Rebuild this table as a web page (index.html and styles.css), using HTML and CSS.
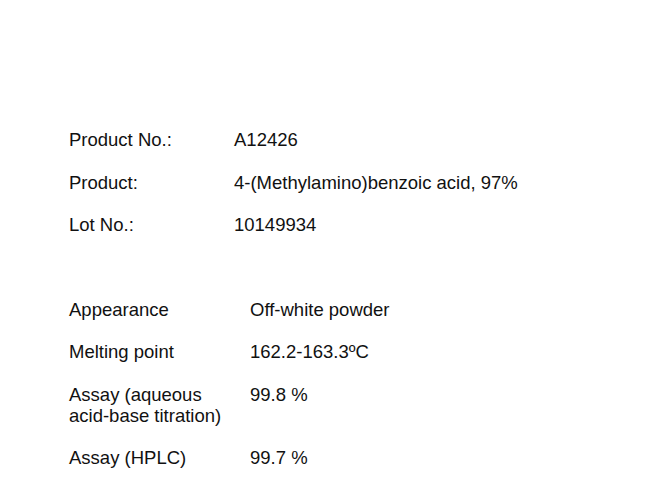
FILE: index.html
```html
<!DOCTYPE html>
<html lang="en">
<head>
    <meta charset="UTF-8">
    <title>Certificate of Analysis - A12426</title>
    <link rel="stylesheet" href="styles.css">
</head>
<body>
    <div class="sheet">
        <div class="info-table header-info">
            <div class="label">Product No.:</div>
            <div class="value">A12426</div>

            <div class="label">Product:</div>
            <div class="value">4-(Methylamino)benzoic acid, 97%</div>

            <div class="label">Lot No.:</div>
            <div class="value">10149934</div>
        </div>

        <div class="info-table results">
            <div class="label">Appearance</div>
            <div class="value">Off-white powder</div>

            <div class="label">Melting point</div>
            <div class="value">162.2-163.3ºC</div>

            <div class="label">Assay (aqueous<br>acid-base titration)</div>
            <div class="value">99.8 %</div>

            <div class="label">Assay (HPLC)</div>
            <div class="value">99.7 %</div>
        </div>
    </div>
</body>
</html>
```

FILE: styles.css
```css
* {
    margin: 0;
    padding: 0;
    box-sizing: border-box;
}

body {
    font-family: 'Liberation Sans', Arial, sans-serif;
    font-size: 18.5px;
    line-height: 21px;
    color: #111;
    background-color: #fff;
}

.sheet {
    padding: 129px 0 0 69px;
}

.info-table {
    display: grid;
    row-gap: 21.5px;
}

.header-info {
    grid-template-columns: 165px auto;
}

.results {
    grid-template-columns: 181px auto;
    margin-top: 63.5px;
}
```
